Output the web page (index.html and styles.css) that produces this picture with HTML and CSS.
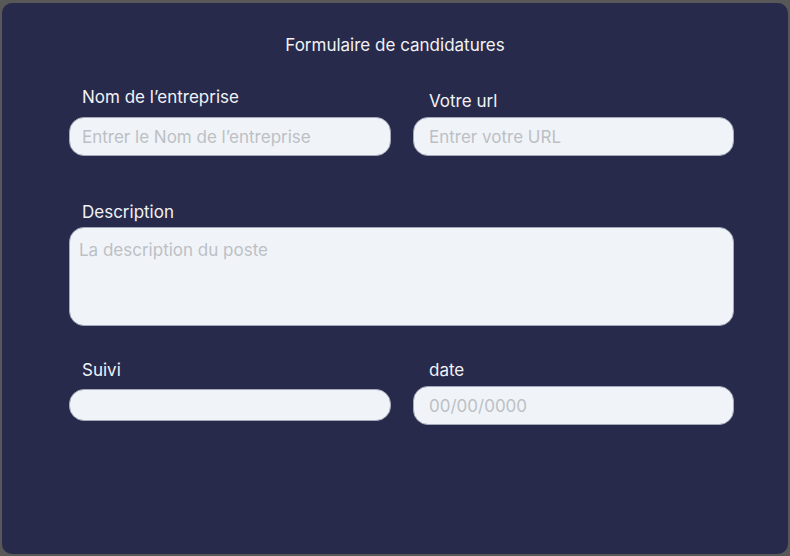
FILE: index.html
```html
<!DOCTYPE html>
<html lang="fr">
<head>
<meta charset="utf-8">
<title>Formulaire de candidatures</title>
<link rel="stylesheet" href="styles.css">
</head>
<body>
<main class="card">
  <h1 class="title">Formulaire de candidatures</h1>
  <form class="form">
    <div class="row row-top">
      <div class="field">
        <label class="label label-nom" for="nom">Nom de l’entreprise</label>
        <input class="input input-nom" id="nom" type="text" placeholder="Entrer le Nom de l’entreprise">
      </div>
      <div class="field">
        <label class="label label-url" for="url">Votre url</label>
        <input class="input input-url" id="url" type="text" placeholder="Entrer votre URL">
      </div>
    </div>
    <div class="field field-desc">
      <label class="label label-desc" for="desc">Description</label>
      <textarea class="textarea" id="desc" placeholder="La description du poste"></textarea>
    </div>
    <div class="row row-bottom">
      <div class="field">
        <label class="label label-suivi" for="suivi">Suivi</label>
        <input class="input input-suivi" id="suivi" type="text">
      </div>
      <div class="field">
        <label class="label label-date" for="date">date</label>
        <input class="input input-date" id="date" type="text" placeholder="00/00/0000">
      </div>
    </div>
  </form>
</main>
</body>
</html>
```

FILE: styles.css
```css
* { box-sizing: border-box; }

html, body {
  height: 100%;
}

body {
  margin: 0;
  padding: 3px 2px 2px 2px;
  background: #585858;
  font-family: Inter, "Noto Sans", sans-serif;
  font-size: 17px;
  line-height: 20px;
}

.card {
  height: 551px;
  background: #272a4b;
  border-radius: 10px;
  padding: 32px 0 0 0;
  color: #f1f2f5;
}

.title {
  margin: 0 0 32px 0;
  font-size: 17px;
  font-weight: 400;
  line-height: 20px;
  text-align: center;
}

.form {
  display: flex;
  flex-direction: column;
  padding: 0 54px 0 67px;
}

.row {
  display: grid;
  grid-template-columns: 322px 321px;
  column-gap: 22px;
  align-items: end;
}

.field {
  display: flex;
  flex-direction: column;
}

.label {
  display: block;
  color: #f1f2f5;
  line-height: 20px;
  padding-left: 13px;
}

.label-nom { margin-bottom: 10px; }
.label-url { margin-bottom: 6px; padding-left: 16px; }

.input,
.textarea {
  font-family: Inter, "Noto Sans", sans-serif;
  font-size: 17px;
  line-height: 20px;
  color: #333;
  background: #f0f4f8;
  border: 1px solid #a4a9ba;
  border-radius: 15px;
  outline: none;
}

.input {
  height: 39px;
  padding: 0 12px;
}

.input-url,
.input-date { padding-left: 15px; }

.input::placeholder,
.textarea::placeholder {
  color: #bcc0c5;
  opacity: 1;
}

.field-desc { margin-top: 46px; }
.label-desc { margin-bottom: 5px; }

.textarea {
  height: 99px;
  width: 665px;
  resize: none;
  padding: 12px 9px;
}

.row-bottom {
  margin-top: 34px;
  align-items: start;
}

.label-suivi { margin-bottom: 9px; }
.input-suivi { height: 32px; }
.label-date { margin-bottom: 6px; padding-left: 16px; }
```
